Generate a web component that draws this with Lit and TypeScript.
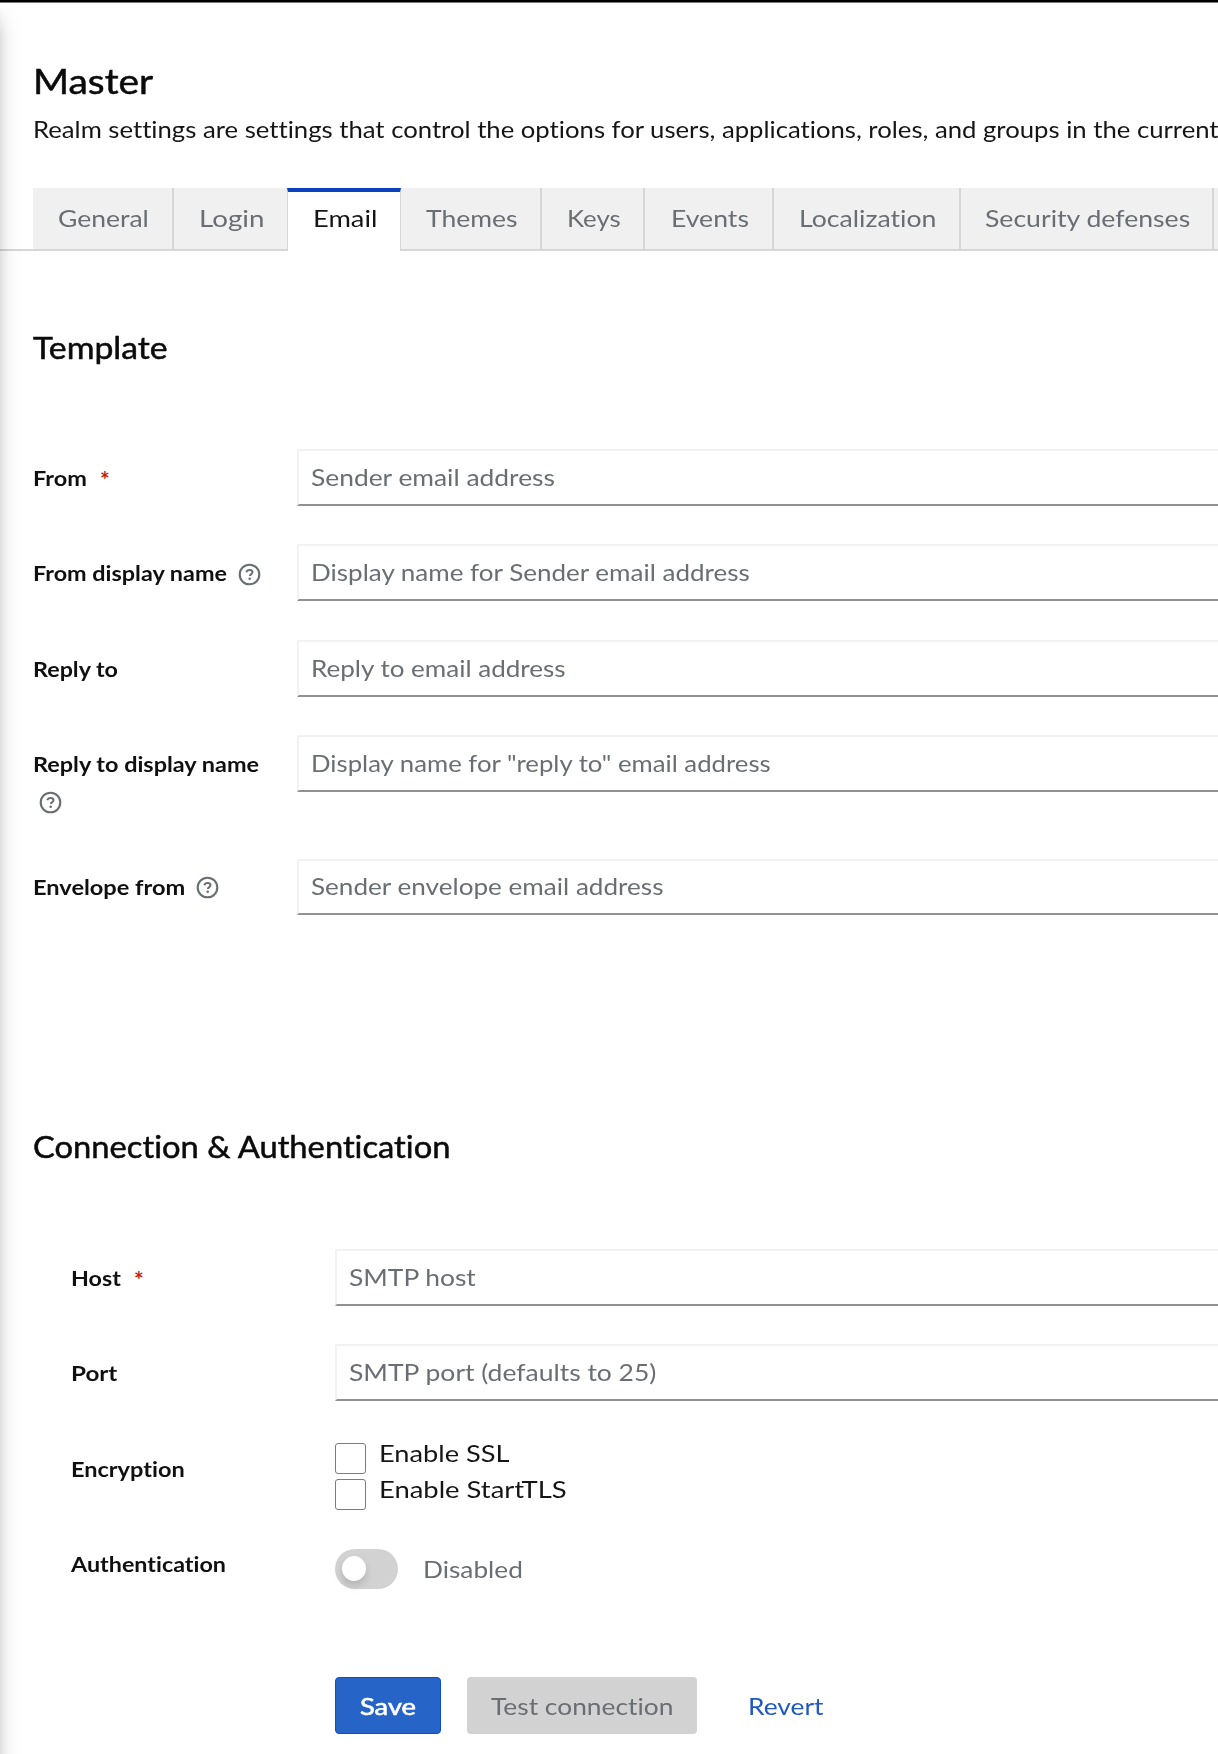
import { LitElement, html, css, svg, nothing } from "lit";
import { customElement, property } from "lit/decorators.js";

/** A single line of text, widened or condensed so that it fills the given measure. */
@customElement("fit-text")
class FitText extends LitElement {
  @property() text = "";
  @property({ type: Number }) measure = 0;

  static styles = css`
    :host { display: inline-block; white-space: nowrap; flex: none; text-align: left; }
    .run { display: inline-block; white-space: pre; transform-origin: 0 50%; font-variant-ligatures: none; }
  `;

  updated() {
    const run = this.renderRoot.querySelector(".run") as HTMLElement;
    const natural = run.offsetWidth;
    this.style.width = this.measure + "px";
    run.style.transform = `scaleX(${(this.measure / natural).toFixed(4)})`;
  }

  render() {
    return html`<span class="run">${this.text}</span>`;
  }
}

const fit = (text: string, measure: number) =>
  html`<fit-text .text=${text} .measure=${measure}></fit-text>`;

interface Field {
  label: string;
  width: number;
  hint: string;
  hintWidth: number;
  required?: boolean;
  help?: boolean;
  kind?: string;
}

const TABS = [
  { name: "General", text: 91, size: 141 },
  { name: "Login", text: 65, size: 113 },
  { name: "Email", text: 64, size: 114, active: true },
  { name: "Themes", text: 91, size: 141 },
  { name: "Keys", text: 54, size: 103 },
  { name: "Events", text: 78, size: 129 },
  { name: "Localization", text: 137, size: 187 },
  { name: "Security defenses", text: 205, size: 253 },
  { name: "", text: 0, size: 60 },
];

const TEMPLATE: Field[] = [
  { label: "From", width: 54, hint: "Sender email address", hintWidth: 244, required: true },
  { label: "From display name", width: 194, hint: "Display name for Sender email address", hintWidth: 439, help: true },
  { label: "Reply to", width: 85, hint: "Reply to email address", hintWidth: 255 },
  { label: "Reply to display name", width: 226, hint: 'Display name for "reply to" email address', hintWidth: 460, help: true, kind: "tall" },
  { label: "Envelope from", width: 152, hint: "Sender envelope email address", hintWidth: 353, help: true, kind: "short" },
];

const CONNECTION: Field[] = [
  { label: "Host", width: 50, hint: "SMTP host", hintWidth: 127, required: true },
  { label: "Port", width: 46, hint: "SMTP port (defaults to 25)", hintWidth: 307 },
];

@customElement("app-root")
class AppRoot extends LitElement {
  static styles = css`
    :host {
      display: block;
      position: relative;
      box-sizing: border-box;
      width: 100%;
      height: 1754px;
      overflow: hidden;
      background: #fff;
      color: #151515;
      font-family: Lato, "Liberation Sans", sans-serif;
      font-size: 23.9px;
    }
    * { box-sizing: border-box; }
    .edge { height: 3px; background: linear-gradient(#000 0 2px, #777 2px 3px); }
    .shade {
      position: absolute; left: 0; top: 3px; bottom: 0; width: 24px;
      background: linear-gradient(90deg, rgba(0,0,0,.125), rgba(0,0,0,.075) 4px, rgba(0,0,0,.03) 9px, rgba(0,0,0,.012) 15px, rgba(0,0,0,0));
      -webkit-mask-image: linear-gradient(transparent, #000 32px);
      mask-image: linear-gradient(transparent, #000 32px);
      pointer-events: none;
    }
    .head { padding: 55px 0 0 33px; height: 185px; }
    h1, h2 { margin: 0; font-weight: 400; color: #0b0b0b; -webkit-text-stroke: .5px #0b0b0b; white-space: nowrap; }
    h1 { font-size: 34px; line-height: 45px; }
    h2 { font-size: 30.5px; line-height: 39px; height: 40px; padding-left: 33px; }
    .intro { margin-top: 7px; line-height: 37px; white-space: nowrap; }
    .tabs { display: flex; height: 63px; width: 1300px; }
    .tabs::before { content: ""; flex: none; width: 33px; border-bottom: 2px solid #d6d6d6; }
    .tab {
      flex: none; display: flex; justify-content: center; line-height: 60px; height: 63px; padding-left: 2px;
      background: #f0f0f0; color: #6a6e73; border-right: 2px solid #d6d6d6; border-bottom: 2px solid #d6d6d6;
    }
    .tab.before { border-right: 0; }
    .tab.active {
      background: #fff; color: #151515; border-top: 4px solid #0b41bd; border-bottom: 0; line-height: 52px;
      border-left: 1px solid #d6d6d6; border-right: 1px solid #d6d6d6;
    }
    .first { margin-top: 77px; }
    .second { margin-top: 212px; }
    .form { display: flex; flex-direction: column; margin: 81px -20px 0 33px; }
    .form.inset { margin-left: 71px; margin-top: 82px; }
    .row { display: flex; height: 95.33px; align-items: flex-start; }
    .row.tall { height: 124px; }
    .row.short { height: 56px; }
    .label {
      flex: none; width: 263.5px; padding-right: 14px; display: flex; flex-wrap: wrap; align-items: center;
      font-size: 20px; font-weight: 700; line-height: 58px; color: #101010;
    }
    .short .label { line-height: 56px; }
    .star { color: #c9190b; font-size: 23px; margin: 2px 0 0 13px; line-height: 20px; font-weight: 700; }
    .help { flex: none; width: 23px; height: 23px; margin-left: 11px; margin-top: 2px; color: #6a6e73; display: block; }
    .tall .help { margin: -2px 0 0 6px; }
    .box {
      flex: 1; height: 57px; padding-left: 12.5px; line-height: 52px; color: #6a6e73;
      border-top: 2px solid #f2f2f2; border-left: 2px solid #f2f2f2; border-bottom: 2px solid #8f9194;
    }
    .short .box { height: 56px; line-height: 50px; }
    .checks { margin-top: -5px; }
    .check { display: flex; height: 36px; line-height: 36px; }
    .tick { width: 31px; height: 31px; margin: 8px 13.5px 0 0; border: 1.5px solid #7c7c7c; border-radius: 3px; background: #fff; flex: none; }
    .switch { display: flex; align-items: center; margin-top: 14px; height: 40px; color: #6a6e73; line-height: 36px; }
    .track { width: 63px; height: 40px; border-radius: 20px; background: #d2d2d2; display: flex; align-items: center; padding-left: 7px; margin-right: 25px; }
    .knob { width: 24px; height: 25px; border-radius: 50%; background: #fff; box-shadow: 0 5px 9px rgba(0,0,0,.15); }
    .actions { display: flex; margin: 47px 0 0 334.5px; height: 57px; line-height: 57px; white-space: nowrap; }
    .btn { border-radius: 4px; text-align: center; height: 57px; }
    .save { width: 106px; background: #2665c7; border: 1px solid #0a4fc8; color: #fff; line-height: 55px; -webkit-text-stroke: .6px #fff; margin-right: 26.5px; }
    .test { width: 230px; background: #d2d2d2; color: #6a6e73; }
    .revert { color: #1f57c3; padding-left: 51px; }
  `;

  private help() {
    return html`<svg class="help" viewBox="0 0 23 23" fill="none" stroke="currentColor">
      ${svg`<circle cx="11.5" cy="11.5" r="9.8" stroke-width="2.1"></circle>
      <path d="M8.3 9.2C8.8 7.6 10 7 11.5 7c1.8 0 3 .9 3 2.3 0 1.8-2.6 1.9-2.6 3.8" stroke-width="2"></path>
      <circle cx="11.7" cy="15.7" r="1.3" fill="currentColor" stroke="none"></circle>`}
    </svg>`;
  }

  private field(f: Field) {
    return html`<div class="row ${f.kind ?? ""}">
      <div class="label">
        ${fit(f.label, f.width)}
        ${f.required ? html`<span class="star">*</span>` : nothing}
        ${f.help ? this.help() : nothing}
      </div>
      <div class="box">${fit(f.hint, f.hintWidth)}</div>
    </div>`;
  }

  render() {
    return html`
      <div class="edge"></div>
      <header class="head">
        <h1>${fit("Master", 120)}</h1>
        <div class="intro">${fit("Realm settings are settings that control the options for users, applications, roles, and groups in the current", 1186)}</div>
      </header>
      <nav class="tabs">
        ${TABS.map(
          (t, i) => html`<div
            class="tab ${t.active ? "active" : ""} ${TABS[i + 1]?.active ? "before" : ""}"
            style="width:${t.size}px"
          >${t.name ? fit(t.name, t.text) : nothing}</div>`
        )}
      </nav>
      <h2 class="first">${fit("Template", 135)}</h2>
      <section class="form">${TEMPLATE.map((f) => this.field(f))}</section>
      <h2 class="second">${fit("Connection & Authentication", 417)}</h2>
      <section class="form inset">
        ${CONNECTION.map((f) => this.field(f))}
        <div class="row">
          <div class="label">${fit("Encryption", 114)}</div>
          <div class="checks">
            <div class="check"><span class="tick"></span>${fit("Enable SSL", 131)}</div>
            <div class="check"><span class="tick"></span>${fit("Enable StartTLS", 188)}</div>
          </div>
        </div>
        <div class="row">
          <div class="label">${fit("Authentication", 155)}</div>
          <div class="switch"><span class="track"><span class="knob"></span></span>${fit("Disabled", 100)}</div>
        </div>
      </section>
      <div class="actions">
        <div class="btn save">${fit("Save", 56)}</div>
        <div class="btn test">${fit("Test connection", 182)}</div>
        <div class="revert">${fit("Revert", 75)}</div>
      </div>
      <div class="shade"></div>
    `;
  }
}
